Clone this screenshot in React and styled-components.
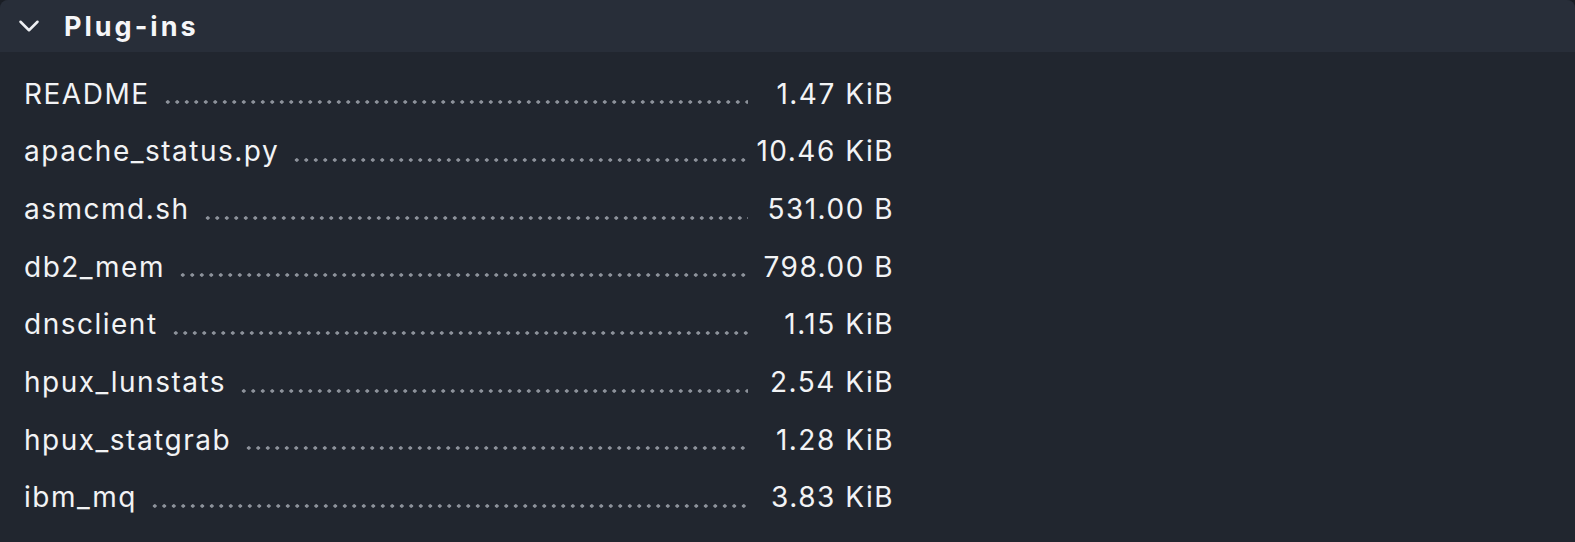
import React from "react";
import styled, { createGlobalStyle } from "styled-components";
import { ChevronDown } from "lucide-react";

const Global = createGlobalStyle`
  html, body { margin: 0; padding: 0; background: #1a1e25; }
  body { font-family: Inter, "Noto Sans", sans-serif; color: #f2f3f5; }
`;

const Panel = styled.section`
  width: 1575px;
  height: 542px;
  background: #21262f;
  border-radius: 8px 8px 0 0;
  overflow: hidden;
`;

const Header = styled.header`
  height: 52px;
  background: #282e39;
  display: flex;
  align-items: center;
  padding-left: 12px;
  gap: 18px;
  box-sizing: border-box;
`;

const Title = styled.h2`
  margin: 0;
  font-size: 27px;
  font-weight: 700;
  letter-spacing: 3px;
  color: #f5f6f8;
`;

const List = styled.ul`
  list-style: none;
  margin: 0;
  padding: 13px 0 0 24px;
  width: 870px;
`;

const Row = styled.li`
  height: 57.65px;
  display: flex;
  align-items: center;
  font-size: 28px;
  letter-spacing: 1.5px;
`;

const Name = styled.span`
  flex: none;
  margin-right: 13px;
`;

const Leader = styled.span`
  flex: 1;
  height: 4px;
  margin-top: 17px;
  background-image: radial-gradient(circle, #8d929b 1.5px, transparent 1.9px);
  background-size: 9.5px 4px;
  background-repeat: repeat-x;
  background-position: left center;
`;

const Size = styled.span`
  flex: none;
  width: 146px;
  text-align: right;
`;

const files = [
  ["README", "1.47 KiB"],
  ["apache_status.py", "10.46 KiB"],
  ["asmcmd.sh", "531.00 B"],
  ["db2_mem", "798.00 B"],
  ["dnsclient", "1.15 KiB"],
  ["hpux_lunstats", "2.54 KiB"],
  ["hpux_statgrab", "1.28 KiB"],
  ["ibm_mq", "3.83 KiB"],
];

export default function App() {
  return (
    <>
      <Global />
      <Panel>
        <Header>
          <ChevronDown size={34} strokeWidth={1.8} color="#eef0f3" />
          <Title>Plug-ins</Title>
        </Header>
        <List>
          {files.map(([n, s]) => (
            <Row key={n}>
              <Name>{n}</Name>
              <Leader />
              <Size>{s}</Size>
            </Row>
          ))}
        </List>
      </Panel>
    </>
  );
}
